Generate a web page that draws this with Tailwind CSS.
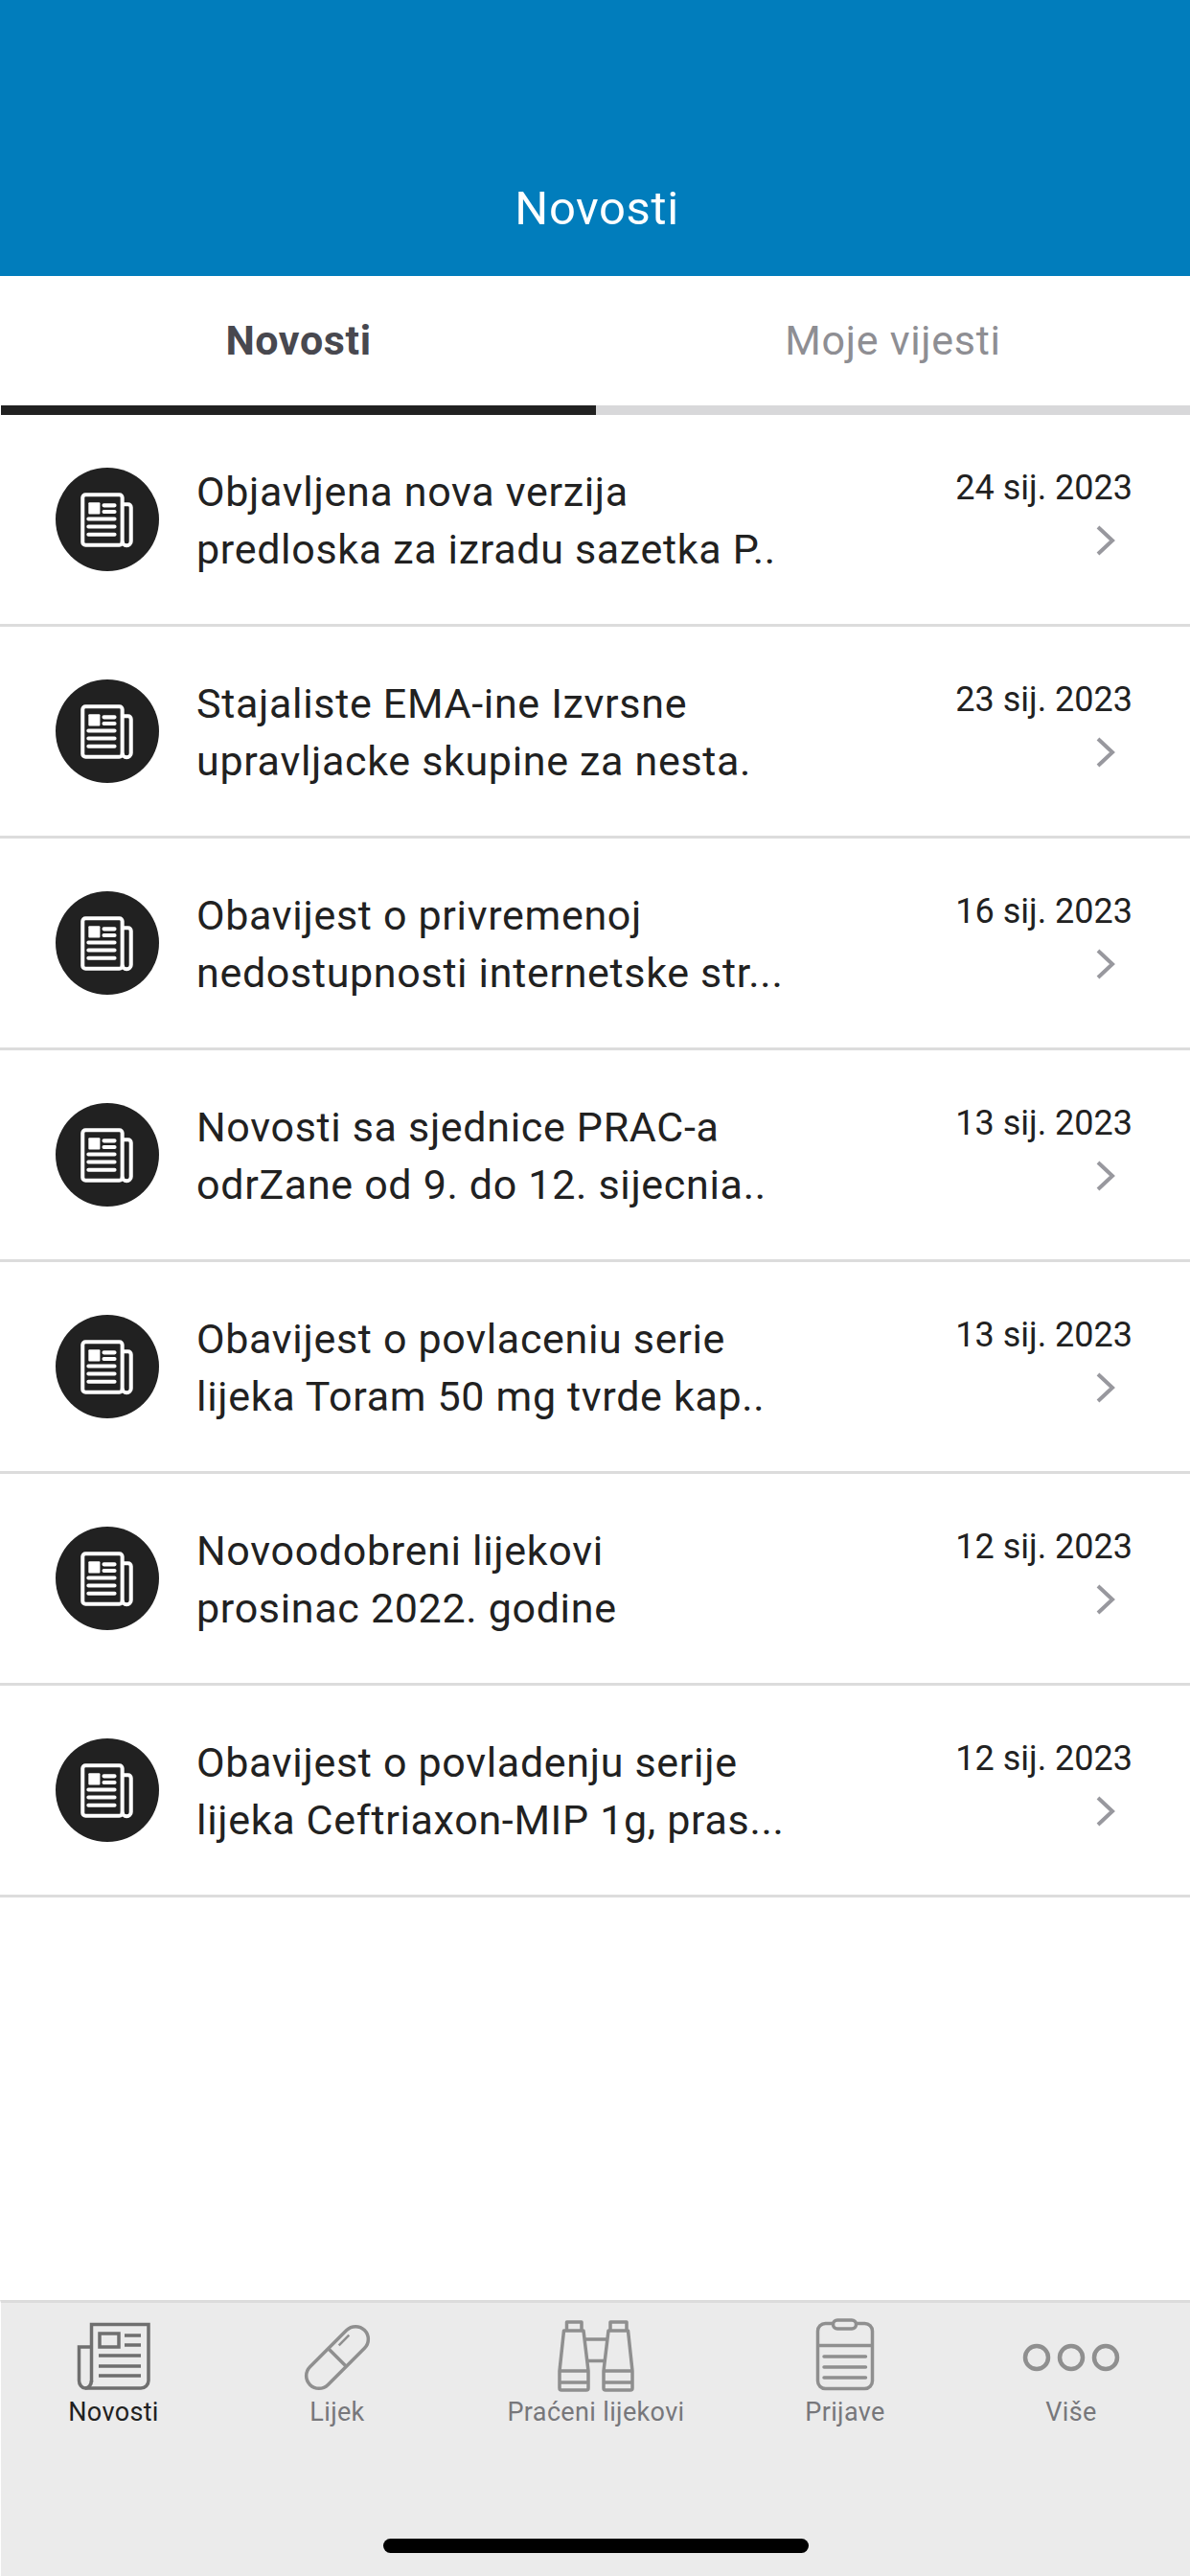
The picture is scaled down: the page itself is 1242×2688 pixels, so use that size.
<!DOCTYPE html>
<html lang="en">
<head>
    <meta charset="UTF-8">
    <meta name="viewport" content="width=device-width, initial-scale=1.0">
    <title>Novosti</title>
    <script src="https://cdn.jsdelivr.net/npm/@tailwindcss/browser@4"></script>
</head>
<body class="bg-white font-['Roboto',sans-serif]">
<svg class="hidden">
    <symbol id="news-white" viewBox="0 0 107 107">
        <g fill="none" stroke="#fff" stroke-width="4">
            <rect x="28" y="28" width="41" height="52" rx="3"></rect>
            <path d="M69 38h6a3 3 0 0 1 3 3v35a4.500 4.500 0 0 1-9 0"></path>
            <path d="M50 39h11M50 45.500h11M34 53h27M34 61h27M34 69h27" stroke-linecap="round"></path>
        </g>
        <rect x="34" y="36" width="12" height="12" rx="1" fill="#fff"></rect>
    </symbol>
</svg>
<div class="flex flex-col h-[2688px] overflow-hidden">
    <!-- Header -->
    <header class="h-[288px] bg-[#017dbc] flex items-end justify-center pb-[42px] pl-[4px]">
        <h1 class="text-[49px] leading-[56px] tracking-[0.6px] text-white font-normal">Novosti</h1>
    </header>

    <!-- Tabs -->
    <nav class="grid grid-cols-[622px_620px] h-[145px]">
        <div class="flex flex-col pl-px">
            <div class="flex-1 flex items-center justify-center text-[43px] tracking-[0.6px] font-bold text-[#48484f]">Novosti</div>
            <div class="h-[10px] bg-[#212121]"></div>
        </div>
        <div class="flex flex-col">
            <div class="flex-1 flex items-center justify-center text-[43px] tracking-[0.7px] text-[#8e8e93]">Moje vijesti</div>
            <div class="h-[10px] bg-[#d8d8da]"></div>
        </div>
    </nav>

    <!-- News list -->
    <main class="flex-1">
        <article class="h-[221px] border-b-[3px] border-[#dcdcdc] flex items-start pt-[55px] pl-[58px] pr-[60px]">
            <div class="w-[108px] h-[108px] rounded-full bg-[#212121] shrink-0"><svg class="w-[108px] h-[108px]"><use href="#news-white"></use></svg></div>
            <p class="ml-[39px] -mt-[5px] flex-1 text-[43px] leading-[60px] tracking-[0.68px] text-[#212121]">Objavljena nova verzija<br>predloska za izradu sazetka P..</p>
            <div class="flex flex-col items-end -mt-[1px]">
                <span class="text-[36px] leading-[44px] text-[#212121]">24 sij. 2023</span>
                <svg class="w-[22px] h-[34px] mt-[16px] mr-[17px]" viewBox="0 0 22 34" fill="none" stroke="#98989e" stroke-width="4"><path d="M3 3l15 14L3 31"></path></svg>
            </div>
        </article>
        <article class="h-[221px] border-b-[3px] border-[#dcdcdc] flex items-start pt-[55px] pl-[58px] pr-[60px]">
            <div class="w-[108px] h-[108px] rounded-full bg-[#212121] shrink-0"><svg class="w-[108px] h-[108px]"><use href="#news-white"></use></svg></div>
            <p class="ml-[39px] -mt-[5px] flex-1 text-[43px] leading-[60px] tracking-[0.68px] text-[#212121]">Stajaliste EMA-ine Izvrsne<br>upravljacke skupine za nesta.</p>
            <div class="flex flex-col items-end -mt-[1px]">
                <span class="text-[36px] leading-[44px] text-[#212121]">23 sij. 2023</span>
                <svg class="w-[22px] h-[34px] mt-[16px] mr-[17px]" viewBox="0 0 22 34" fill="none" stroke="#98989e" stroke-width="4"><path d="M3 3l15 14L3 31"></path></svg>
            </div>
        </article>
        <article class="h-[221px] border-b-[3px] border-[#dcdcdc] flex items-start pt-[55px] pl-[58px] pr-[60px]">
            <div class="w-[108px] h-[108px] rounded-full bg-[#212121] shrink-0"><svg class="w-[108px] h-[108px]"><use href="#news-white"></use></svg></div>
            <p class="ml-[39px] -mt-[5px] flex-1 text-[43px] leading-[60px] tracking-[0.68px] text-[#212121]">Obavijest o privremenoj<br>nedostupnosti internetske str...</p>
            <div class="flex flex-col items-end -mt-[1px]">
                <span class="text-[36px] leading-[44px] text-[#212121]">16 sij. 2023</span>
                <svg class="w-[22px] h-[34px] mt-[16px] mr-[17px]" viewBox="0 0 22 34" fill="none" stroke="#98989e" stroke-width="4"><path d="M3 3l15 14L3 31"></path></svg>
            </div>
        </article>
        <article class="h-[221px] border-b-[3px] border-[#dcdcdc] flex items-start pt-[55px] pl-[58px] pr-[60px]">
            <div class="w-[108px] h-[108px] rounded-full bg-[#212121] shrink-0"><svg class="w-[108px] h-[108px]"><use href="#news-white"></use></svg></div>
            <p class="ml-[39px] -mt-[5px] flex-1 text-[43px] leading-[60px] tracking-[0.68px] text-[#212121]">Novosti sa sjednice PRAC-a<br>odrZane od 9. do 12. sijecnia..</p>
            <div class="flex flex-col items-end -mt-[1px]">
                <span class="text-[36px] leading-[44px] text-[#212121]">13 sij. 2023</span>
                <svg class="w-[22px] h-[34px] mt-[16px] mr-[17px]" viewBox="0 0 22 34" fill="none" stroke="#98989e" stroke-width="4"><path d="M3 3l15 14L3 31"></path></svg>
            </div>
        </article>
        <article class="h-[221px] border-b-[3px] border-[#dcdcdc] flex items-start pt-[55px] pl-[58px] pr-[60px]">
            <div class="w-[108px] h-[108px] rounded-full bg-[#212121] shrink-0"><svg class="w-[108px] h-[108px]"><use href="#news-white"></use></svg></div>
            <p class="ml-[39px] -mt-[5px] flex-1 text-[43px] leading-[60px] tracking-[0.68px] text-[#212121]">Obavijest o povlaceniu serie<br>lijeka Toram 50 mg tvrde kap..</p>
            <div class="flex flex-col items-end -mt-[1px]">
                <span class="text-[36px] leading-[44px] text-[#212121]">13 sij. 2023</span>
                <svg class="w-[22px] h-[34px] mt-[16px] mr-[17px]" viewBox="0 0 22 34" fill="none" stroke="#98989e" stroke-width="4"><path d="M3 3l15 14L3 31"></path></svg>
            </div>
        </article>
        <article class="h-[221px] border-b-[3px] border-[#dcdcdc] flex items-start pt-[55px] pl-[58px] pr-[60px]">
            <div class="w-[108px] h-[108px] rounded-full bg-[#212121] shrink-0"><svg class="w-[108px] h-[108px]"><use href="#news-white"></use></svg></div>
            <p class="ml-[39px] -mt-[5px] flex-1 text-[43px] leading-[60px] tracking-[0.68px] text-[#212121]">Novoodobreni lijekovi<br>prosinac 2022. godine</p>
            <div class="flex flex-col items-end -mt-[1px]">
                <span class="text-[36px] leading-[44px] text-[#212121]">12 sij. 2023</span>
                <svg class="w-[22px] h-[34px] mt-[16px] mr-[17px]" viewBox="0 0 22 34" fill="none" stroke="#98989e" stroke-width="4"><path d="M3 3l15 14L3 31"></path></svg>
            </div>
        </article>
        <article class="h-[221px] border-b-[3px] border-[#dcdcdc] flex items-start pt-[55px] pl-[58px] pr-[60px]">
            <div class="w-[108px] h-[108px] rounded-full bg-[#212121] shrink-0"><svg class="w-[108px] h-[108px]"><use href="#news-white"></use></svg></div>
            <p class="ml-[39px] -mt-[5px] flex-1 text-[43px] leading-[60px] tracking-[0.68px] text-[#212121]">Obavijest o povladenju serije<br>lijeka Ceftriaxon-MIP 1g, pras...</p>
            <div class="flex flex-col items-end -mt-[1px]">
                <span class="text-[36px] leading-[44px] text-[#212121]">12 sij. 2023</span>
                <svg class="w-[22px] h-[34px] mt-[16px] mr-[17px]" viewBox="0 0 22 34" fill="none" stroke="#98989e" stroke-width="4"><path d="M3 3l15 14L3 31"></path></svg>
            </div>
        </article>
    </main>

    <!-- Bottom tab bar -->
    <footer class="h-[288px] bg-[#ebebeb] border-t-[3px] border-t-[#dcdcdc] border-l border-l-white flex flex-col">
        <div class="grid grid-cols-[235px_232px_308px_212px_254px] text-[27px] leading-[32px] tracking-[0.35px] text-[#77777b]">
            <div class="flex flex-col items-center">
                <svg class="w-[80px] h-[76px] mt-[19px]" viewBox="0 0 80 76" fill="none" stroke="#6f6f6f" stroke-width="3.500">
                    <path d="M16.500 64V3.500H76V62a8 8 0 0 1-8 8H10"></path>
                    <path d="M16.500 27H3.500V62a6.500 8 0 0 0 13 0"></path>
                    <rect x="25" y="13" width="20" height="14"></rect>
                    <path d="M51 15h17M51 25h17M24 36h44M24 47h44M24 57h44"></path>
                </svg>
                <span class="mt-[3px] text-[#212121]">Novosti</span>
            </div>
            <div class="flex flex-col items-center">
                <svg class="w-[74px] h-[74px] mt-[20px] mb-[1px]" viewBox="0 0 74 74" fill="none" stroke="#8f8f8f" stroke-width="3.500">
                    <rect x="-3.250" y="23.750" width="80.500" height="26.500" rx="13.250" transform="rotate(-45 37 37)"></rect>
                    <path d="M27.500 27.500l19 19"></path>
                    <path d="M38.700 24.300l10.600-10.600" stroke-width="2.500"></path>
                </svg>
                <span class="mt-[3px]">Lijek</span>
            </div>
            <div class="flex flex-col items-center">
                <svg class="w-[82px] h-[77px] mt-[17px]" viewBox="0 0 82 77" fill="none" stroke="#8f8f8f" stroke-width="3.500" stroke-linejoin="round">
                    <path d="M10.500 12V3h15.500v9M7.500 12h20.500l5 42v18a2 2 0 0 1-2 2H5a2 2 0 0 1-2-2V54z"></path>
                    <path d="M3 54h30M3 66h30"></path>
                    <path d="M56 12V3h17v9M54 12h20.500l4.500 42v18a2 2 0 0 1-2 2H51a2 2 0 0 1-2-2V54z"></path>
                    <path d="M49 54h30M49 66h30"></path>
                    <path d="M29.500 21H53M31.500 43.500H50"></path>
                </svg>
                <span class="mt-[4px]">Praćeni lijekovi</span>
            </div>
            <div class="flex flex-col items-center">
                <svg class="w-[64px] h-[76px] mt-[16px] mb-[2px]" viewBox="0 0 64 76" fill="none" stroke="#8f8f8f" stroke-width="3.500">
                    <rect x="3.500" y="5.500" width="57" height="68" rx="8"></rect>
                    <path d="M3.500 28.500h57"></path>
                    <rect x="19.500" y="2" width="24" height="9" rx="4.500" fill="#ebebeb"></rect>
                    <path d="M10 40h43.500M10 51h43.500M10 62h43.500" stroke-linecap="round"></path>
                </svg>
                <span class="mt-[4px]">Prijave</span>
            </div>
            <div class="flex flex-col items-center pl-[6px]">
                <svg class="w-[104px] h-[32px] mt-[41px] mb-[22px]" viewBox="0 0 104 32" fill="none" stroke="#8f8f8f" stroke-width="4.500">
                    <circle cx="16" cy="16" r="12"></circle>
                    <circle cx="52" cy="16" r="12"></circle>
                    <circle cx="88" cy="16" r="12"></circle>
                </svg>
                <span class="mt-[3px]">Više</span>
            </div>
        </div>
        <div class="mt-auto mb-[24px] self-center w-[444px] h-[15px] rounded-[8px] bg-black"></div>
    </footer>
</div>
</body>
</html>
